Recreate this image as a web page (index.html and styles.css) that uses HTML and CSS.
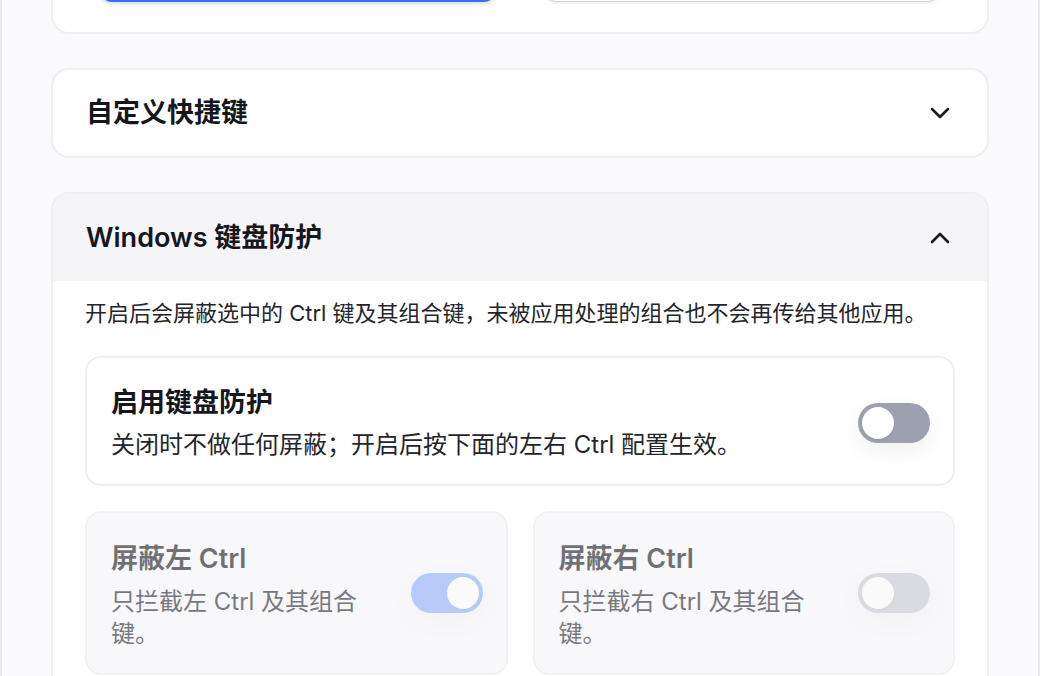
FILE: index.html
```html
<!DOCTYPE html>
<html lang="zh-CN">
<head>
<meta charset="utf-8">
<title>设置</title>
<link rel="stylesheet" href="styles.css">
</head>
<body>
<div class="frame">
  <div class="column">
    <section class="card card-top">
      <div class="btn-row">
        <div class="btn btn-primary"></div>
        <div class="btn btn-secondary"></div>
      </div>
    </section>

    <section class="card">
      <header class="card-head">
        <h2 class="card-title">自定义快捷键</h2>
        <svg class="chevron" width="20" height="12" viewBox="0 0 20 12" aria-hidden="true"><path d="M2 2 L10 10 L18 2" fill="none" stroke="#1b1c22" stroke-width="2.6" stroke-linecap="round" stroke-linejoin="round"/></svg>
      </header>
    </section>

    <section class="card card-open">
      <header class="card-head card-head-open">
        <h2 class="card-title">Windows 键盘防护</h2>
        <svg class="chevron" width="20" height="12" viewBox="0 0 20 12" aria-hidden="true"><path d="M2 10 L10 2 L18 10" fill="none" stroke="#1b1c22" stroke-width="2.6" stroke-linecap="round" stroke-linejoin="round"/></svg>
      </header>
      <div class="card-body">
        <p class="desc">开启后会屏蔽选中的 Ctrl 键及其组合键，未被应用处理的组合也不会再传给其他应用。</p>

        <div class="option option-main">
          <div class="option-text">
            <div class="option-title">启用键盘防护</div>
            <div class="option-sub">关闭时不做任何屏蔽；开启后按下面的左右 Ctrl 配置生效。</div>
          </div>
          <span class="toggle"><span class="thumb"></span></span>
        </div>

        <div class="option-grid">
          <div class="option option-disabled">
            <div class="option-text">
              <div class="option-title">屏蔽左 Ctrl</div>
              <div class="option-sub">只拦截左 Ctrl 及其组合键。</div>
            </div>
            <span class="toggle toggle-on toggle-dim"><span class="thumb"></span></span>
          </div>
          <div class="option option-disabled">
            <div class="option-text">
              <div class="option-title">屏蔽右 Ctrl</div>
              <div class="option-sub">只拦截右 Ctrl 及其组合键。</div>
            </div>
            <span class="toggle toggle-dim"><span class="thumb"></span></span>
          </div>
        </div>
      </div>
    </section>
  </div>
</div>
</body>
</html>
```

FILE: styles.css
```css
* {
  box-sizing: border-box;
}

html, body {
  margin: 0;
  padding: 0;
}

body {
  background: #fafafc;
  font-family: Inter, "Noto Sans CJK SC", sans-serif;
  color: #16171d;
}

.frame {
  height: 676px;
  overflow: hidden;
  border-left: 2px solid #e7e8ef;
  border-right: 2px solid #e7e8ef;
  background: #fafafc;
}

.column {
  display: flex;
  flex-direction: column;
  gap: 34px;
  padding: 0 49px;
  margin-top: -90px;
}

.card {
  background: #ffffff;
  border: 2px solid #efeff3;
  border-radius: 18px;
  overflow: hidden;
}

.card-top {
  padding: 34px 47px 30px;
}

.btn-row {
  display: grid;
  grid-template-columns: 1fr 1fr;
  gap: 48px;
}

.btn {
  height: 56px;
  border-radius: 12px;
}

.btn-primary {
  background: #3370f5;
  box-shadow: 0 2px 4px rgba(20, 40, 90, 0.16);
}

.btn-secondary {
  background: #ffffff;
  border: 1px solid #cfd0db;
  box-shadow: 0 2px 3px rgba(20, 20, 40, 0.06);
}

.card-head {
  height: 86px;
  display: flex;
  align-items: center;
  justify-content: space-between;
  padding: 0 37px 0 33px;
}

.card-head-open {
  height: 87px;
  background: #f5f5f8;
}

.card-title {
  margin: 0;
  font-size: 27px;
  line-height: 38px;
  font-weight: 600;
  color: #16171d;
}

.chevron {
  display: block;
  flex: none;
}

.card-body {
  padding: 16px 32px 40px;
}

.desc {
  margin: 0 0 27px;
  font-size: 22px;
  line-height: 32px;
  color: #24252c;
}

.option {
  display: flex;
  align-items: center;
  gap: 24px;
  border: 2px solid #efeff3;
  border-radius: 16px;
  padding: 26px 23px 23px 24px;
  background: #ffffff;
}

.option-text {
  flex: 1;
  min-width: 0;
}

.option-title {
  font-size: 27px;
  line-height: 38px;
  font-weight: 600;
  color: #16171d;
}

.option-sub {
  margin-top: 7px;
  font-size: 24px;
  line-height: 32px;
  color: #24252c;
}

.option-grid {
  margin-top: 25px;
  display: grid;
  grid-template-columns: 1fr 1fr;
  gap: 25px;
}

.option-disabled {
  background: #f8f8fa;
  border-color: #f1f1f4;
  align-items: flex-start;
  padding-top: 27px;
}

.option-disabled .option-text {
  opacity: 0.6;
}

.option-disabled .option-sub {
  margin-top: 8px;
}

.option-disabled .toggle {
  margin-top: 33px;
}

.toggle {
  flex: none;
  position: relative;
  width: 72px;
  height: 40px;
  border-radius: 20px;
  background: #9ca1ad;
  box-shadow: 0 8px 22px rgba(20, 24, 40, 0.06);
}

.thumb {
  position: absolute;
  top: 4px;
  left: 4px;
  width: 32px;
  height: 32px;
  border-radius: 50%;
  background: #ffffff;
  box-shadow: 0 1px 2px rgba(0, 0, 0, 0.08);
}

.toggle-on {
  background: #3370f5;
}

.toggle-on .thumb {
  left: 36px;
}

.toggle-dim {
  opacity: 0.32;
}
```
